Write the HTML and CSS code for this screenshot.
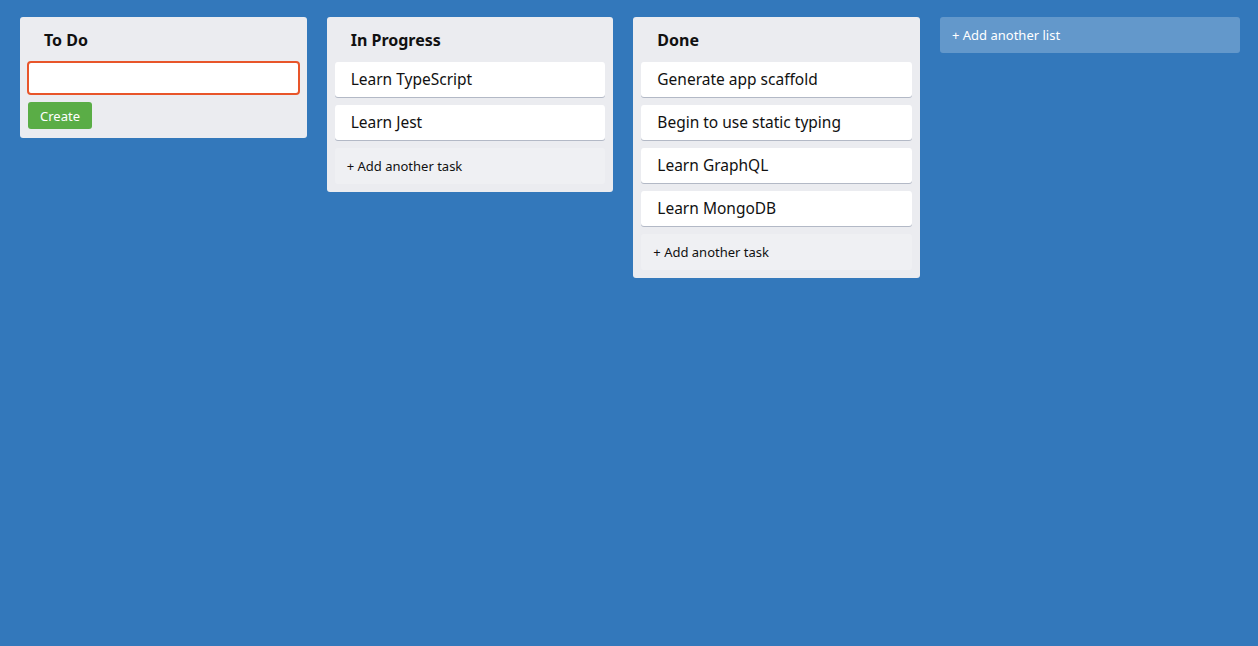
FILE: index.html
```html
<!DOCTYPE html>
<html>
<head>
<meta charset="utf-8">
<link rel="stylesheet" href="styles.css">
</head>
<body>
<div class="board">
  <section class="list">
    <h2 class="list-title">To Do</h2>
    <div class="new-task">
      <input class="task-input" type="text">
      <button class="create-btn">Create</button>
    </div>
  </section>
  <section class="list">
    <h2 class="list-title">In Progress</h2>
    <div class="cards">
      <div class="card">Learn TypeScript</div>
      <div class="card">Learn Jest</div>
      <div class="add-task">+ Add another task</div>
    </div>
  </section>
  <section class="list">
    <h2 class="list-title">Done</h2>
    <div class="cards">
      <div class="card">Generate app scaffold</div>
      <div class="card">Begin to use static typing</div>
      <div class="card">Learn GraphQL</div>
      <div class="card">Learn MongoDB</div>
      <div class="add-task">+ Add another task</div>
    </div>
  </section>
  <div class="add-list">+ Add another list</div>
</div>
</body>
</html>
```

FILE: styles.css
```css
* { box-sizing: border-box; }
html, body { margin: 0; height: 100%; }
body {
  background: #3378bb;
  font-family: "Noto Sans", "Open Sans", sans-serif;
  color: #111;
}
.board {
  display: flex;
  align-items: flex-start;
  gap: 20px;
  padding: 17px 20px;
}
.list {
  width: 286.67px;
  flex: none;
  background: #ebecf0;
  border-radius: 3px;
  padding: 0 8px 8px;
}
.list-title {
  margin: 0;
  height: 45px;
  padding: 13px 0 0 16px;
  font-size: 16px;
  font-weight: 700;
  line-height: 20px;
  color: #111;
}
.new-task { display: flex; flex-direction: column; align-items: flex-start; }
.task-input {
  width: 273px;
  height: 34px;
  margin: -1px 0 0 -1px;
  border: 2px solid #e8552a;
  border-radius: 4px;
  background: #fff;
  outline: none;
}
.create-btn {
  margin: 7px 0 1px;
  width: 64px;
  height: 27px;
  border: none;
  border-radius: 3px;
  background: #5aad46;
  color: #fff;
  font-family: inherit;
  font-size: 13px;
  padding: 0;
}
.cards { display: flex; flex-direction: column; gap: 8px; }
.card {
  height: 35px;
  background: #fff;
  border-radius: 3px;
  box-shadow: 0 1px 0 #b3b9c6;
  padding: 0 16px 2px;
  display: flex;
  align-items: center;
  font-size: 15.5px;
}
.add-task {
  height: 36px;
  border-radius: 3px;
  background: #eff0f3;
  display: flex;
  align-items: center;
  padding: 0 12px;
  font-size: 13px;
}
.add-list {
  width: 300px;
  flex: none;
  height: 36px;
  border-radius: 3px;
  background: rgba(255,255,255,0.24);
  color: #fff;
  font-size: 13px;
  display: flex;
  align-items: center;
  padding: 0 12px;
}
```
